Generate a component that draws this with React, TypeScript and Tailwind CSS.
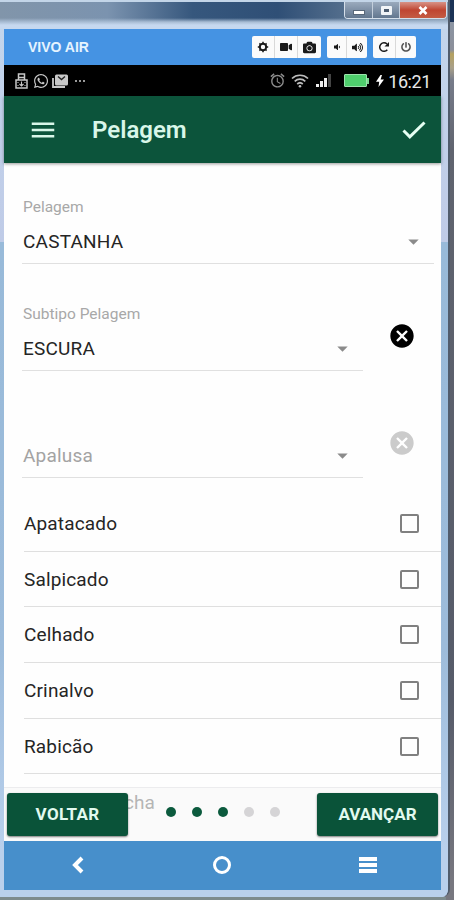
import React from 'react';
import { MdAlarm, MdArrowDropDown, MdCancel, MdMenu } from 'react-icons/md';
import { FaCamera, FaPowerOff, FaVideo, FaVolumeDown, FaVolumeUp, FaWhatsapp } from 'react-icons/fa';

const markings = ['Apatacado', 'Salpicado', 'Celhado', 'Crinalvo', 'Rabicão'];

function TitleBar() {
  return (
    <div className="flex h-[29px] shrink-0 justify-end border-t-2 border-[#c3d5e8] bg-[linear-gradient(to_bottom,transparent_16px,#a9bdd4_20px,#c6d8ef_23px),linear-gradient(to_right,#8195aa,#7b93af_24%,#36577d_43%,#2f4f76_62%,#516c8b_76%,#8298ae)] pr-[1px]">
      <div className="flex h-[17px] overflow-hidden rounded-b border border-t-0 border-[#d5dfea]">
        <div className="flex w-[28px] items-end justify-center border-r border-[#c4cfdc] bg-linear-to-b from-[#9aaabd] to-[#63778f] pb-[3px]">
          <div className="h-[5px] w-[12px] border border-[#59687a] bg-white" />
        </div>
        <div className="flex w-[27px] items-center justify-center border-r border-[#c4cfdc] bg-linear-to-b from-[#9aaabd] to-[#63778f]">
          <div className="h-[9px] w-[11px] rounded-[1px] border-[3px] border-[#f1f4f7] bg-[#4c5c70]" />
        </div>
        <div className="flex w-[46px] items-center justify-center bg-linear-to-b from-[#d79287] via-[#bf4531] to-[#c45b43]">
          <svg width="10" height="9" viewBox="0 0 10 9" stroke="#fff" strokeWidth="2.6">
            <path d="M1.5 1l7 7M8.5 1l-7 7" />
          </svg>
        </div>
      </div>
    </div>
  );
}

function ToolGroup({ children }: { children: React.ReactNode }) {
  return (
    <div className="flex h-[22px] items-stretch divide-x divide-[#d9d9d9] overflow-hidden rounded-[2px] bg-[#fbfbfb] text-[#1a1a1a]">
      {children}
    </div>
  );
}

function Tool({ children, wide }: { children: React.ReactNode; wide?: boolean }) {
  return <div className={`flex items-center justify-center ${wide ? 'w-[23px]' : 'w-[20px]'}`}>{children}</div>;
}

function EmulatorBar() {
  return (
    <div className="flex h-[36px] shrink-0 items-center justify-between bg-[#4593e3] pl-6 pr-[25px]">
      <span className="pt-px font-['Liberation_Sans'] text-[14px] font-bold text-[#e6f4ff]">VIVO AIR</span>
      <div className="flex gap-[6px]">
        <ToolGroup>
          <Tool wide>
            <svg width="12" height="12" viewBox="0 0 12 12" fill="none" stroke="currentColor">
              <circle cx="6" cy="6" r="3.2" strokeWidth="2" />
              <path d="M6 .8v1.700M6 9.500v1.700M.8 6h1.700M9.500 6h1.700M2.400 2.400l1 1M8.600 8.600l1 1M2.400 9.600l1-1M8.600 3.400l1-1" strokeWidth="1.5" />
            </svg>
          </Tool>
          <Tool wide><FaVideo size={12} /></Tool>
          <Tool wide><FaCamera size={13} /></Tool>
        </ToolGroup>
        <ToolGroup>
          <Tool><FaVolumeDown size={8} /></Tool>
          <Tool><FaVolumeUp size={11} /></Tool>
        </ToolGroup>
        <ToolGroup>
          <Tool wide>
            <svg width="12" height="12" viewBox="0 0 12 12" fill="none" stroke="currentColor">
              <path d="M9.300 8.800A4.300 4.300 0 1 1 9 3" strokeWidth="1.500" />
              <path d="M11 1v4.500H6.500z" fill="currentColor" stroke="none" />
            </svg>
          </Tool>
          <Tool><FaPowerOff size={10} className="text-[#555]" /></Tool>
        </ToolGroup>
      </div>
    </div>
  );
}

function StatusBar() {
  return (
    <div className="flex h-[31px] shrink-0 items-center bg-black pl-[11px] pr-[10px] text-[#c8c8c8]">
      <svg width="13" height="16" viewBox="0 0 13 16" fill="none" stroke="currentColor" strokeWidth="1.5">
        <path d="M3.500 7V1h6v6M3.500 4.500h6M1 7h11v8H1z" />
        <path d="M6.500 8.500v4.500M4.500 11l2 2 2-2M2.500 9.500h1M9.500 9.500h1M2.500 12.500h1M9.500 12.500h1" strokeWidth="1.1" />
      </svg>
      <FaWhatsapp size={16} className="ml-[5px]" />
      <svg width="17" height="14" viewBox="0 0 17 14" className="ml-[3px]">
        <path d="M1 4v9h12" fill="none" stroke="currentColor" strokeWidth="1.8" />
        <rect x="3" y="0.500" width="13" height="11" rx="1.500" fill="currentColor" />
        <path d="M6 2.500l3.500 3 3.500-3" fill="none" stroke="#222" strokeWidth="1.400" />
      </svg>
      <span className="ml-[6px] flex gap-[2px]">
        <i className="h-[2px] w-[2px] bg-[#999]" />
        <i className="h-[2px] w-[2px] bg-[#999]" />
        <i className="h-[2px] w-[2px] bg-[#999]" />
      </span>
      <div className="ml-auto flex items-center">
        <MdAlarm size={17} className="text-[#8d8d8d]" />
        <svg width="18" height="14" viewBox="0 0 18 14" fill="none" stroke="#bdbdbd" strokeWidth="1.700" className="ml-[5px]">
          <path d="M1 4.500a11.500 11.500 0 0 1 16 0M3.700 7.300a7.700 7.700 0 0 1 10.600 0M6.200 10a4.200 4.200 0 0 1 5.600 0" />
          <circle cx="9" cy="12.200" r="1.300" fill="#bdbdbd" stroke="none" />
        </svg>
        <div className="ml-[7px] flex h-[13px] items-end gap-[1px] pr-px">
          <i className="h-[3px] w-[3px] bg-[#eee]" />
          <i className="h-[6px] w-[3px] bg-[#eee]" />
          <i className="h-[9px] w-[3px] bg-[#eee]" />
          <i className="h-[13px] w-[3px] bg-[#444]" />
        </div>
        <div className="ml-[12px] h-[13px] w-[23px] rounded-[1px] border border-[#9de3ad] bg-[#4fcf6d]" />
        <div className="h-[6px] w-[2px] bg-[#7fd894]" />
        <svg width="8" height="12" viewBox="0 0 8 12" fill="#fff" className="ml-[7px]">
          <path d="M4.500 0L0 6.800h3.200L2.500 12 8 4.600H4.600L6 0z" />
        </svg>
        <span className="ml-[4px] pt-px text-[18px] tracking-[-0.4px] text-[#e8e8e8]">16:21</span>
      </div>
    </div>
  );
}

function AppBar() {
  return (
    <div className="z-10 flex h-[67px] shrink-0 items-center bg-[#0c543b] pl-[24px] pr-[15px] text-[#d9f7e9] shadow-[0_1px_3px_rgba(0,0,0,0.4)]">
      <MdMenu size={30} />
      <h1 className="ml-[34px] text-[24px] font-semibold">Pelagem</h1>
      <svg width="24" height="18" viewBox="0 0 24 18" fill="none" stroke="#e6fff3" strokeWidth="3" className="ml-auto">
        <path d="M1.500 9.500l6.300 6.300L22.500 1.500" />
      </svg>
    </div>
  );
}

interface SelectFieldProps {
  label?: string;
  value: string;
  placeholder?: boolean;
}

function SelectField({ label, value, placeholder }: SelectFieldProps) {
  return (
    <div className="flex h-[69px] flex-1 flex-col justify-between border-b border-[#e0e0e0]">
      <span className="pl-px pt-[2px] text-[15.5px] leading-[20px] text-[#a8a8a8]">{label}</span>
      <div className="flex items-center justify-between pb-[9px] pl-px pr-[8px]">
        <span className={`text-[19px] leading-6 tracking-[0.2px] ${placeholder ? 'text-[#a3a3a3]' : 'text-[#252525]'}`}>
          {value}
        </span>
        <MdArrowDropDown size={25} className="text-[#8b8b8b]" />
      </div>
    </div>
  );
}

function Form() {
  return (
    <div className="flex flex-col pl-[18px] pt-[32px]">
      <div className="flex pr-[7px]">
        <SelectField label="Pelagem" value="CASTANHA" />
      </div>
      <div className="mt-[38px] flex pr-[25px]">
        <SelectField label="Subtipo Pelagem" value="ESCURA" />
        <MdCancel size={28} className="ml-[25px] mt-[20px] text-black" />
      </div>
      <div className="mt-[38px] flex pr-[25px]">
        <SelectField value="Apalusa" placeholder />
        <MdCancel size={28} className="ml-[25px] mt-[20px] text-[#cbcbcb]" />
      </div>
    </div>
  );
}

function MarkingList() {
  return (
    <ul className="mt-[18px] pl-5">
      {markings.map((name) => (
        <li
          key={name}
          className="flex h-[55.7px] items-center justify-between border-b border-[#dfdfdf] pr-[22px] text-[19px] tracking-[0.15px] text-[#252525]"
        >
          <span className="pt-[2px]">{name}</span>
          <span className="size-[19px] rounded-[2px] border-2 border-[#808080]" />
        </li>
      ))}
      <li className="flex h-[55.7px] items-center pl-[100px] pt-px text-[19px] text-[#8a8a8a]">cha</li>
    </ul>
  );
}

function StepFooter() {
  return (
    <div className="absolute inset-x-0 bottom-0 flex h-[54px] items-center justify-between border-t border-[#ececee] bg-[#f5f4f6]/40 pl-[3px] pr-[3px]">
      <button className="h-[43px] w-[121px] rounded-[3px] bg-[#0a5339] text-[17px] font-bold tracking-[0.3px] text-[#e2faef] shadow-[0_1px_2px_rgba(0,0,0,0.5)]">
        VOLTAR
      </button>
      <div className="mb-[6px] flex gap-[16px]">
        {[1, 2, 3, 4, 5].map((step) => (
          <span key={step} className={`size-[10px] rounded-full ${step <= 3 ? 'bg-[#0b5a3d]' : 'bg-[#d5d4d6]'}`} />
        ))}
      </div>
      <button className="h-[43px] w-[121px] rounded-[3px] bg-[#0a5339] text-[17px] font-bold text-[#e2faef] shadow-[0_1px_2px_rgba(0,0,0,0.5)]">
        AVANÇAR
      </button>
    </div>
  );
}

function NavBar() {
  return (
    <div className="flex h-[49px] shrink-0 items-center bg-[#478fcb] pb-[2px] pl-[67px] pr-[64px] text-white">
      <svg width="13" height="18" viewBox="0 0 13 18" fill="none" stroke="currentColor" strokeWidth="4">
        <path d="M11 2L4 9l7 7" />
      </svg>
      <div className="ml-[129px] size-[18px] rounded-full border-[3px] border-white" />
      <div className="ml-auto flex w-[18px] flex-col gap-[2px]">
        <i className="h-[4px] bg-white" />
        <i className="h-[4px] bg-white" />
        <i className="h-[4px] bg-white" />
      </div>
    </div>
  );
}

export default function App() {
  return (
    <div className="flex h-[900px] w-[454px] flex-col overflow-hidden bg-[linear-gradient(to_bottom,#1c3356_22px,#8c95a3_22px,#8b8f9a_50px,#b5a160_54px,#a8a08a_68px,#777c8a_80px,#60646f_150px,#565b69_700px,#77777f_880px)] font-[Roboto,sans-serif]">
      <div className="flex h-[897px] w-[450px] flex-col overflow-hidden rounded-br-lg border-r-2 border-[#515c6c] bg-[#c6d8ef]">
        <TitleBar />
        <div className="flex min-h-0 flex-1 bg-[linear-gradient(to_bottom,#c3d5ec,#bfcbe7_213px,#98bad9_213px,#9dbcdb_620px,#b9d0ec_820px)] pb-[7px] pl-[4px] pr-[7px]">
          <div className="flex w-[437px] flex-col">
            <EmulatorBar />
            <StatusBar />
            <AppBar />
            <main className="relative min-h-0 flex-1 overflow-hidden bg-[#fefefe]">
              <Form />
              <MarkingList />
              <StepFooter />
            </main>
            <NavBar />
          </div>
        </div>
      </div>
      <div className="h-[3px] w-[446px] bg-[#7d8b8d]" />
    </div>
  );
}
